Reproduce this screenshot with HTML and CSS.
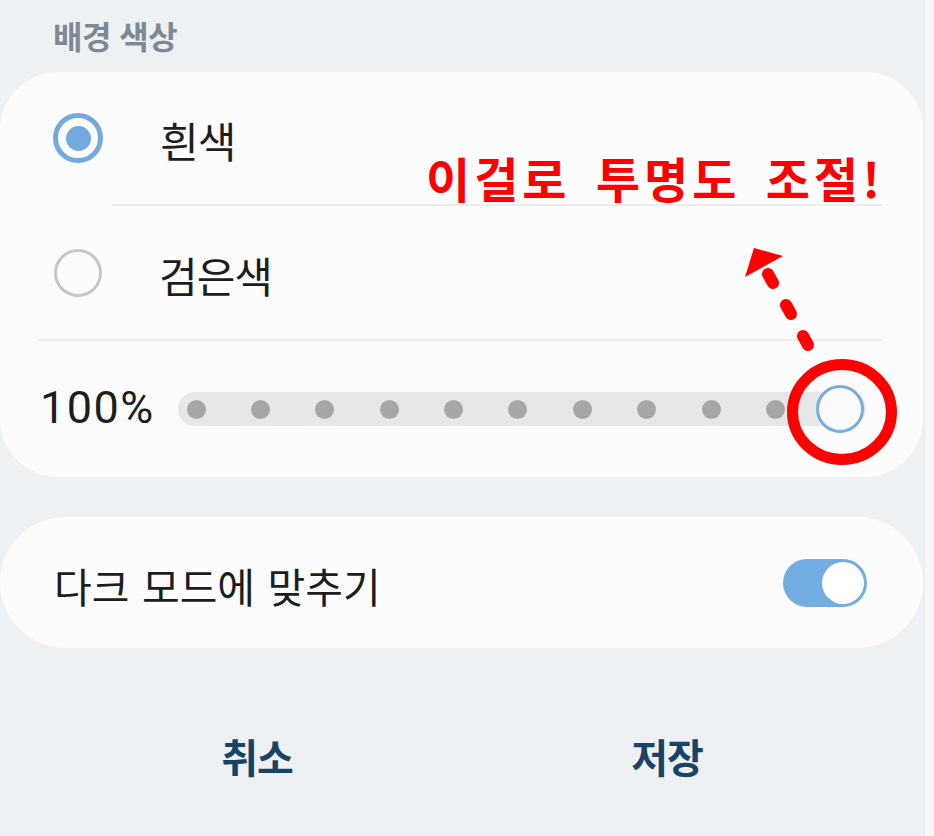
FILE: index.html
```html
<!DOCTYPE html>
<html lang="ko">
<head>
<meta charset="utf-8">
<title>배경 색상</title>
<link rel="stylesheet" href="styles.css">
</head>
<body>
<div class="screen">
  <h2 class="section-title">배경 색상</h2>

  <div class="card color-card">
    <div class="option-row">
      <span class="radio radio-on"><span class="radio-dot"></span></span>
      <span class="option-label">흰색</span>
    </div>
    <div class="divider divider-inset"></div>
    <div class="option-row">
      <span class="radio radio-off"></span>
      <span class="option-label">검은색</span>
    </div>
    <div class="divider divider-full"></div>
    <div class="slider-row">
      <span class="slider-value">100%</span>
      <div class="slider-track">
        <div class="slider-steps">
          <span class="step"></span><span class="step"></span><span class="step"></span><span class="step"></span><span class="step"></span>
          <span class="step"></span><span class="step"></span><span class="step"></span><span class="step"></span><span class="step"></span>
          <span class="thumb"></span>
        </div>
      </div>
    </div>
  </div>

  <div class="card dark-card">
    <span class="dark-label">다크 모드에 맞추기</span>
    <span class="toggle"><span class="toggle-knob"></span></span>
  </div>

  <div class="actions">
    <button class="action-btn">취소</button>
    <button class="action-btn">저장</button>
  </div>

  <div class="annotation-text">이걸로 투명도 조절!</div>
  <svg class="annotation" width="924" height="836" viewBox="0 0 924 836" aria-hidden="true">
    <ellipse cx="842" cy="412" rx="49.5" ry="47.5" fill="none" stroke="#ff0000" stroke-width="11"/>
    <g stroke="#ff0000" stroke-width="12" stroke-linecap="round">
      <line x1="768" y1="274" x2="773" y2="283"/>
      <line x1="786" y1="305" x2="791" y2="314"/>
      <line x1="803" y1="336" x2="808" y2="345"/>
    </g>
    <polygon points="745,277 754,248 783,256" fill="#ff0000"/>
  </svg>
</div>
<div class="edge-strip"></div>
</body>
</html>
```

FILE: styles.css
```css
* {
  box-sizing: border-box;
}

html, body {
  margin: 0;
  padding: 0;
}

body {
  display: flex;
  width: 934px;
  height: 836px;
  overflow: hidden;
  background: #eef1f4;
  font-family: "Noto Sans CJK KR", "Noto Sans", sans-serif;
}

.screen {
  position: relative;
  width: 924px;
  height: 836px;
  background: #eef1f4;
  display: flex;
  flex-direction: column;
}

.edge-strip {
  width: 10px;
  height: 836px;
  background: #f6f6f6;
  border-left: 1px solid #e9eaeb;
}

.section-title {
  margin: 0;
  height: 72px;
  padding: 13px 0 0 53px;
  font-size: 32px;
  font-weight: 700;
  line-height: 44px;
  color: #7e8994;
  letter-spacing: -0.5px;
}

.card {
  width: 923px;
  background: #fcfcfc;
}

.color-card {
  height: 405px;
  border-radius: 58px;
  display: flex;
  flex-direction: column;
}

.option-row {
  height: 132px;
  display: flex;
  align-items: center;
  padding-left: 53px;
}

.option-row + .divider + .option-row {
  height: 133px;
}

.radio {
  width: 50px;
  height: 50px;
  border-radius: 50%;
  display: flex;
  align-items: center;
  justify-content: center;
  flex-shrink: 0;
}

.radio-on {
  border: 5px solid #72aadd;
}

.radio-dot {
  width: 25px;
  height: 25px;
  border-radius: 50%;
  background: #72aadd;
}

.radio-off {
  border: 3px solid #c6c6c6;
  width: 48px;
  height: 48px;
  margin-left: 1px;
}

.option-label {
  margin-left: 57px;
  font-size: 42px;
  color: #1d1d1d;
  line-height: 50px;
  letter-spacing: -1px;
  padding-top: 4px;
}

.divider {
  height: 2px;
  background: #ededed;
  margin-right: 41px;
}

.divider-inset {
  margin-left: 112px;
}

.divider-full {
  margin-left: 38px;
}

.slider-row {
  flex: 1;
  display: flex;
  align-items: center;
  padding-left: 40px;
}

.slider-value {
  width: 138px;
  font-family: Roboto, "Noto Sans", sans-serif;
  font-size: 45px;
  font-weight: 400;
  color: #1d1d1d;
  letter-spacing: 1.5px;
  line-height: 50px;
  padding-bottom: 2px;
}

.slider-track {
  width: 688px;
  height: 34px;
  border-radius: 17px;
  background: #e6e7e9;
  display: flex;
  align-items: center;
}

.slider-steps {
  flex: 1;
  margin: 0 -6px 0 -14px;
  display: grid;
  grid-template-columns: repeat(11, 1fr);
  justify-items: center;
  align-items: center;
}

.step {
  width: 19px;
  height: 19px;
  border-radius: 50%;
  background: #a6a6a6;
}

.thumb {
  width: 48px;
  height: 48px;
  border-radius: 50%;
  background: #fbfbfb;
  border: 3px solid #79aedc;
}

.dark-card {
  margin-top: 40px;
  height: 131px;
  border-radius: 66px;
  display: flex;
  align-items: center;
  justify-content: space-between;
  padding: 0 56px 0 54px;
}

.dark-label {
  font-size: 41px;
  color: #1d1d1d;
  letter-spacing: 0;
  word-spacing: 1px;
  line-height: 50px;
  padding-top: 4px;
}

.toggle {
  width: 84px;
  height: 48px;
  border-radius: 24px;
  background: #74ade1;
  display: flex;
  align-items: center;
  justify-content: flex-end;
  padding: 0 3px;
}

.toggle-knob {
  width: 42px;
  height: 42px;
  border-radius: 50%;
  background: #ffffff;
}

.actions {
  margin-top: 48px;
  display: flex;
  padding: 0 52px;
}

.action-btn {
  flex: 1;
  height: 120px;
  border: none;
  background: transparent;
  font-family: "Noto Sans CJK KR", "Noto Sans", sans-serif;
  font-size: 40px;
  font-weight: 700;
  color: #1a4368;
  letter-spacing: -1px;
  padding: 0;
}

.annotation {
  position: absolute;
  left: 0;
  top: 0;
  pointer-events: none;
}

.annotation-text {
  position: absolute;
  left: 426px;
  top: 144px;
  font-size: 48px;
  font-weight: 700;
  color: #ff0000;
  line-height: 66px;
  letter-spacing: 4px;
  word-spacing: 8px;
  white-space: nowrap;
}
```
